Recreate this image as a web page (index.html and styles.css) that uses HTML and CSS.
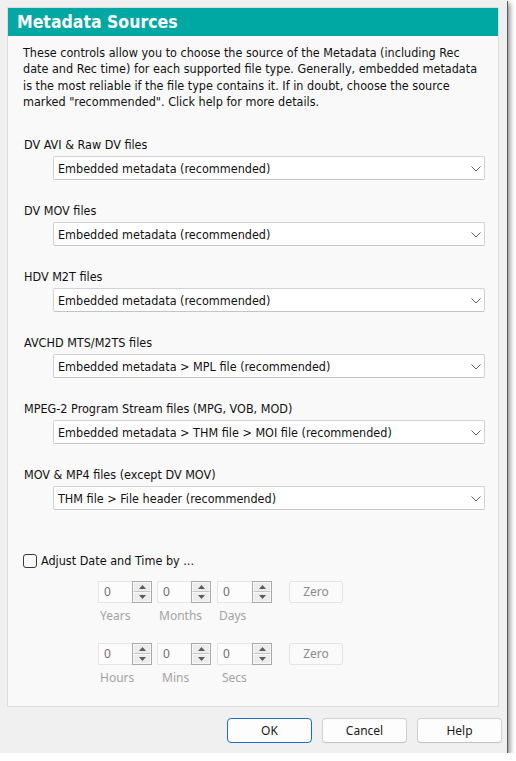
FILE: index.html
```html
<!DOCTYPE html>
<html>
<head>
<meta charset="utf-8">
<title>Metadata Sources</title>
<link rel="stylesheet" href="styles.css">
</head>
<body>
<div class="window">
  <div class="panel">
    <div class="titlebar">Metadata Sources</div>
    <div class="content">
      <p class="intro">These controls allow you to choose the source of the Metadata (including Rec<br>date and Rec time) for each supported file type. Generally, embedded metadata<br>is the most reliable if the file type contains it. If in doubt, choose the source<br>marked "recommended". Click help for more details.</p>

      <div class="group first">
        <div class="label">DV AVI &amp; Raw DV files</div>
        <div class="select"><span>Embedded metadata (recommended)</span><svg class="chev" width="10" height="6" viewBox="0 0 10 6"><polyline points="0.5,0.5 5,5 9.5,0.5" fill="none" stroke="#5f5f5f" stroke-width="1"/></svg></div>
      </div>
      <div class="group">
        <div class="label">DV MOV files</div>
        <div class="select"><span>Embedded metadata (recommended)</span><svg class="chev" width="10" height="6" viewBox="0 0 10 6"><polyline points="0.5,0.5 5,5 9.5,0.5" fill="none" stroke="#5f5f5f" stroke-width="1"/></svg></div>
      </div>
      <div class="group">
        <div class="label">HDV M2T files</div>
        <div class="select"><span>Embedded metadata (recommended)</span><svg class="chev" width="10" height="6" viewBox="0 0 10 6"><polyline points="0.5,0.5 5,5 9.5,0.5" fill="none" stroke="#5f5f5f" stroke-width="1"/></svg></div>
      </div>
      <div class="group">
        <div class="label">AVCHD MTS/M2TS files</div>
        <div class="select"><span>Embedded metadata &gt; MPL file (recommended)</span><svg class="chev" width="10" height="6" viewBox="0 0 10 6"><polyline points="0.5,0.5 5,5 9.5,0.5" fill="none" stroke="#5f5f5f" stroke-width="1"/></svg></div>
      </div>
      <div class="group">
        <div class="label">MPEG-2 Program Stream files (MPG, VOB, MOD)</div>
        <div class="select"><span>Embedded metadata &gt; THM file &gt; MOI file (recommended)</span><svg class="chev" width="10" height="6" viewBox="0 0 10 6"><polyline points="0.5,0.5 5,5 9.5,0.5" fill="none" stroke="#5f5f5f" stroke-width="1"/></svg></div>
      </div>
      <div class="group">
        <div class="label">MOV &amp; MP4 files (except DV MOV)</div>
        <div class="select"><span>THM file &gt; File header (recommended)</span><svg class="chev" width="10" height="6" viewBox="0 0 10 6"><polyline points="0.5,0.5 5,5 9.5,0.5" fill="none" stroke="#5f5f5f" stroke-width="1"/></svg></div>
      </div>

      <div class="check-row">
        <span class="checkbox"></span>
        <span class="check-label">Adjust Date and Time by ...</span>
      </div>

      <div class="spin-block">
        <div class="spin-row">
          <div class="spinner"><span class="spin-val">0</span><span class="spin-btns"><span class="spin-up"><svg width="7" height="4" viewBox="0 0 7 4"><polygon points="0,4 3.5,0 7,4" fill="#5c5c5c"/></svg></span><span class="spin-down"><svg width="7" height="4" viewBox="0 0 7 4"><polygon points="0,0 3.5,4 7,0" fill="#5c5c5c"/></svg></span></span></div>
          <div class="spinner"><span class="spin-val">0</span><span class="spin-btns"><span class="spin-up"><svg width="7" height="4" viewBox="0 0 7 4"><polygon points="0,4 3.5,0 7,4" fill="#5c5c5c"/></svg></span><span class="spin-down"><svg width="7" height="4" viewBox="0 0 7 4"><polygon points="0,0 3.5,4 7,0" fill="#5c5c5c"/></svg></span></span></div>
          <div class="spinner wide"><span class="spin-val">0</span><span class="spin-btns"><span class="spin-up"><svg width="7" height="4" viewBox="0 0 7 4"><polygon points="0,4 3.5,0 7,4" fill="#5c5c5c"/></svg></span><span class="spin-down"><svg width="7" height="4" viewBox="0 0 7 4"><polygon points="0,0 3.5,4 7,0" fill="#5c5c5c"/></svg></span></span></div>
          <div class="zero-btn">Zero</div>
        </div>
        <div class="unit-row">
          <span class="unit">Years</span>
          <span class="unit">Months</span>
          <span class="unit u3">Days</span>
        </div>

        <div class="spin-row second">
          <div class="spinner"><span class="spin-val">0</span><span class="spin-btns"><span class="spin-up"><svg width="7" height="4" viewBox="0 0 7 4"><polygon points="0,4 3.5,0 7,4" fill="#5c5c5c"/></svg></span><span class="spin-down"><svg width="7" height="4" viewBox="0 0 7 4"><polygon points="0,0 3.5,4 7,0" fill="#5c5c5c"/></svg></span></span></div>
          <div class="spinner"><span class="spin-val">0</span><span class="spin-btns"><span class="spin-up"><svg width="7" height="4" viewBox="0 0 7 4"><polygon points="0,4 3.5,0 7,4" fill="#5c5c5c"/></svg></span><span class="spin-down"><svg width="7" height="4" viewBox="0 0 7 4"><polygon points="0,0 3.5,4 7,0" fill="#5c5c5c"/></svg></span></span></div>
          <div class="spinner wide"><span class="spin-val">0</span><span class="spin-btns"><span class="spin-up"><svg width="7" height="4" viewBox="0 0 7 4"><polygon points="0,4 3.5,0 7,4" fill="#5c5c5c"/></svg></span><span class="spin-down"><svg width="7" height="4" viewBox="0 0 7 4"><polygon points="0,0 3.5,4 7,0" fill="#5c5c5c"/></svg></span></span></div>
          <div class="zero-btn">Zero</div>
        </div>
        <div class="unit-row">
          <span class="unit">Hours</span>
          <span class="unit u2b">Mins</span>
          <span class="unit u3b">Secs</span>
        </div>
      </div>
    </div>
  </div>
  <div class="buttons">
    <div class="btn default">OK</div>
    <div class="btn">Cancel</div>
    <div class="btn">Help</div>
  </div>
</div>
</body>
</html>
```

FILE: styles.css
```css
html, body {
  margin: 0;
  padding: 0;
  background: #ffffff;
}

.window {
  width: 507px;
  height: 753px;
  background: #f0f0f0;
  box-shadow: 1px 1px 0 #5a5a5a, 3px 3px 5px rgba(0, 0, 0, 0.45);
  overflow: hidden;
  font-family: "DejaVu Sans Condensed", "Liberation Sans", sans-serif;
  color: #111111;
}

.panel {
  box-sizing: border-box;
  width: 492px;
  height: 700px;
  margin: 7px 0 0 7px;
  border: 1px solid #dedede;
  background: #f9f9f9;
}

.titlebar {
  height: 28px;
  line-height: 28px;
  background: #00a8a4;
  color: #ffffff;
  font-weight: bold;
  font-size: 17.5px;
  padding-left: 9px;
}

.content {
  padding: 9px 13px 0 15px;
}

.intro {
  margin: 0;
  font-size: 12.5px;
  line-height: 16.3px;
  white-space: nowrap;
}

.group {
  margin-top: 23px;
}

.group.first {
  margin-top: 27px;
}

.label {
  font-size: 12.5px;
  line-height: 16px;
  padding-left: 1px;
  white-space: nowrap;
}

.select {
  box-sizing: border-box;
  height: 24px;
  margin: 3px 0 0 30px;
  background: #ffffff;
  border: 1px solid #d2d2d2;
  border-bottom-color: #c4c4c4;
  border-radius: 2px;
  display: flex;
  align-items: center;
  justify-content: space-between;
  padding: 1px 3px 0 4px;
  font-size: 12.5px;
  white-space: nowrap;
}

.chev {
  display: block;
  margin-top: 0;
}

.check-row {
  display: flex;
  align-items: center;
  height: 16px;
  margin-top: 43px;
}

.checkbox {
  box-sizing: border-box;
  width: 14px;
  height: 14px;
  border: 1px solid #3a3a3a;
  border-radius: 3px;
  background: #fbfbfb;
  margin-right: 4px;
}

.check-label {
  font-size: 12.5px;
  line-height: 16px;
}

.spin-block {
  margin-left: 75px;
}

.spin-row {
  display: flex;
  align-items: stretch;
  height: 22px;
  margin-top: 12px;
}

.spin-row.second {
  margin-top: 19px;
}

.spinner {
  display: flex;
  width: 54px;
  height: 22px;
  margin-right: 5px;
}

.spinner.wide {
  margin-left: 1px;
  width: 55px;
}

.spin-val {
  box-sizing: border-box;
  flex: 1;
  height: 22px;
  background: #fcfcfc;
  border: 1px solid #e6e6e6;
  border-right: none;
  font-family: "Noto Sans", sans-serif;
  font-size: 12px;
  line-height: 20px;
  color: #707070;
  padding-left: 5px;
}

.spin-btns {
  box-sizing: border-box;
  width: 20px;
  height: 22px;
  border: 1px solid #a9a9a9;
  display: flex;
  flex-direction: column;
  background: #ececec;
}

.spin-up, .spin-down {
  flex: 1;
  display: flex;
  align-items: center;
  justify-content: center;
  box-sizing: border-box;
  border: 1px solid #f7f7f7;
}

.spin-up {
  border-bottom: 1px solid #c6c6c6;
}

.spin-up svg, .spin-down svg {
  display: block;
}

.zero-btn {
  box-sizing: border-box;
  width: 54px;
  height: 22px;
  margin-left: 12px;
  border: 1px solid #e3e3e3;
  border-radius: 3px;
  background: #fafafa;
  color: #8a8a8a;
  font-family: "Noto Sans", sans-serif;
  font-size: 12px;
  line-height: 20px;
  text-align: center;
}

.unit-row {
  display: flex;
  margin-top: 5px;
  height: 16px;
}

.unit {
  width: 59px;
  padding-left: 2px;
  box-sizing: border-box;
  font-family: "Noto Sans", sans-serif;
  font-size: 12px;
  line-height: 16px;
  color: #a3a3a3;
}

.unit.u2b {
  padding-left: 5px;
}

.unit.u3 {
  padding-left: 3px;
}

.unit.u3b {
  padding-left: 6px;
}

.buttons {
  display: flex;
  justify-content: flex-end;
  gap: 10px;
  margin-top: 11px;
  padding-right: 5px;
}

.btn {
  box-sizing: border-box;
  width: 85px;
  height: 25px;
  border: 1px solid #d0d0d0;
  border-bottom-color: #c0c0c0;
  border-radius: 4px;
  background: #fdfdfd;
  font-family: "Noto Sans", sans-serif;
  font-size: 12px;
  line-height: 23px;
  text-align: center;
  color: #1a1a1a;
}

.btn.default {
  border-color: #1a6fc4;
}
```
